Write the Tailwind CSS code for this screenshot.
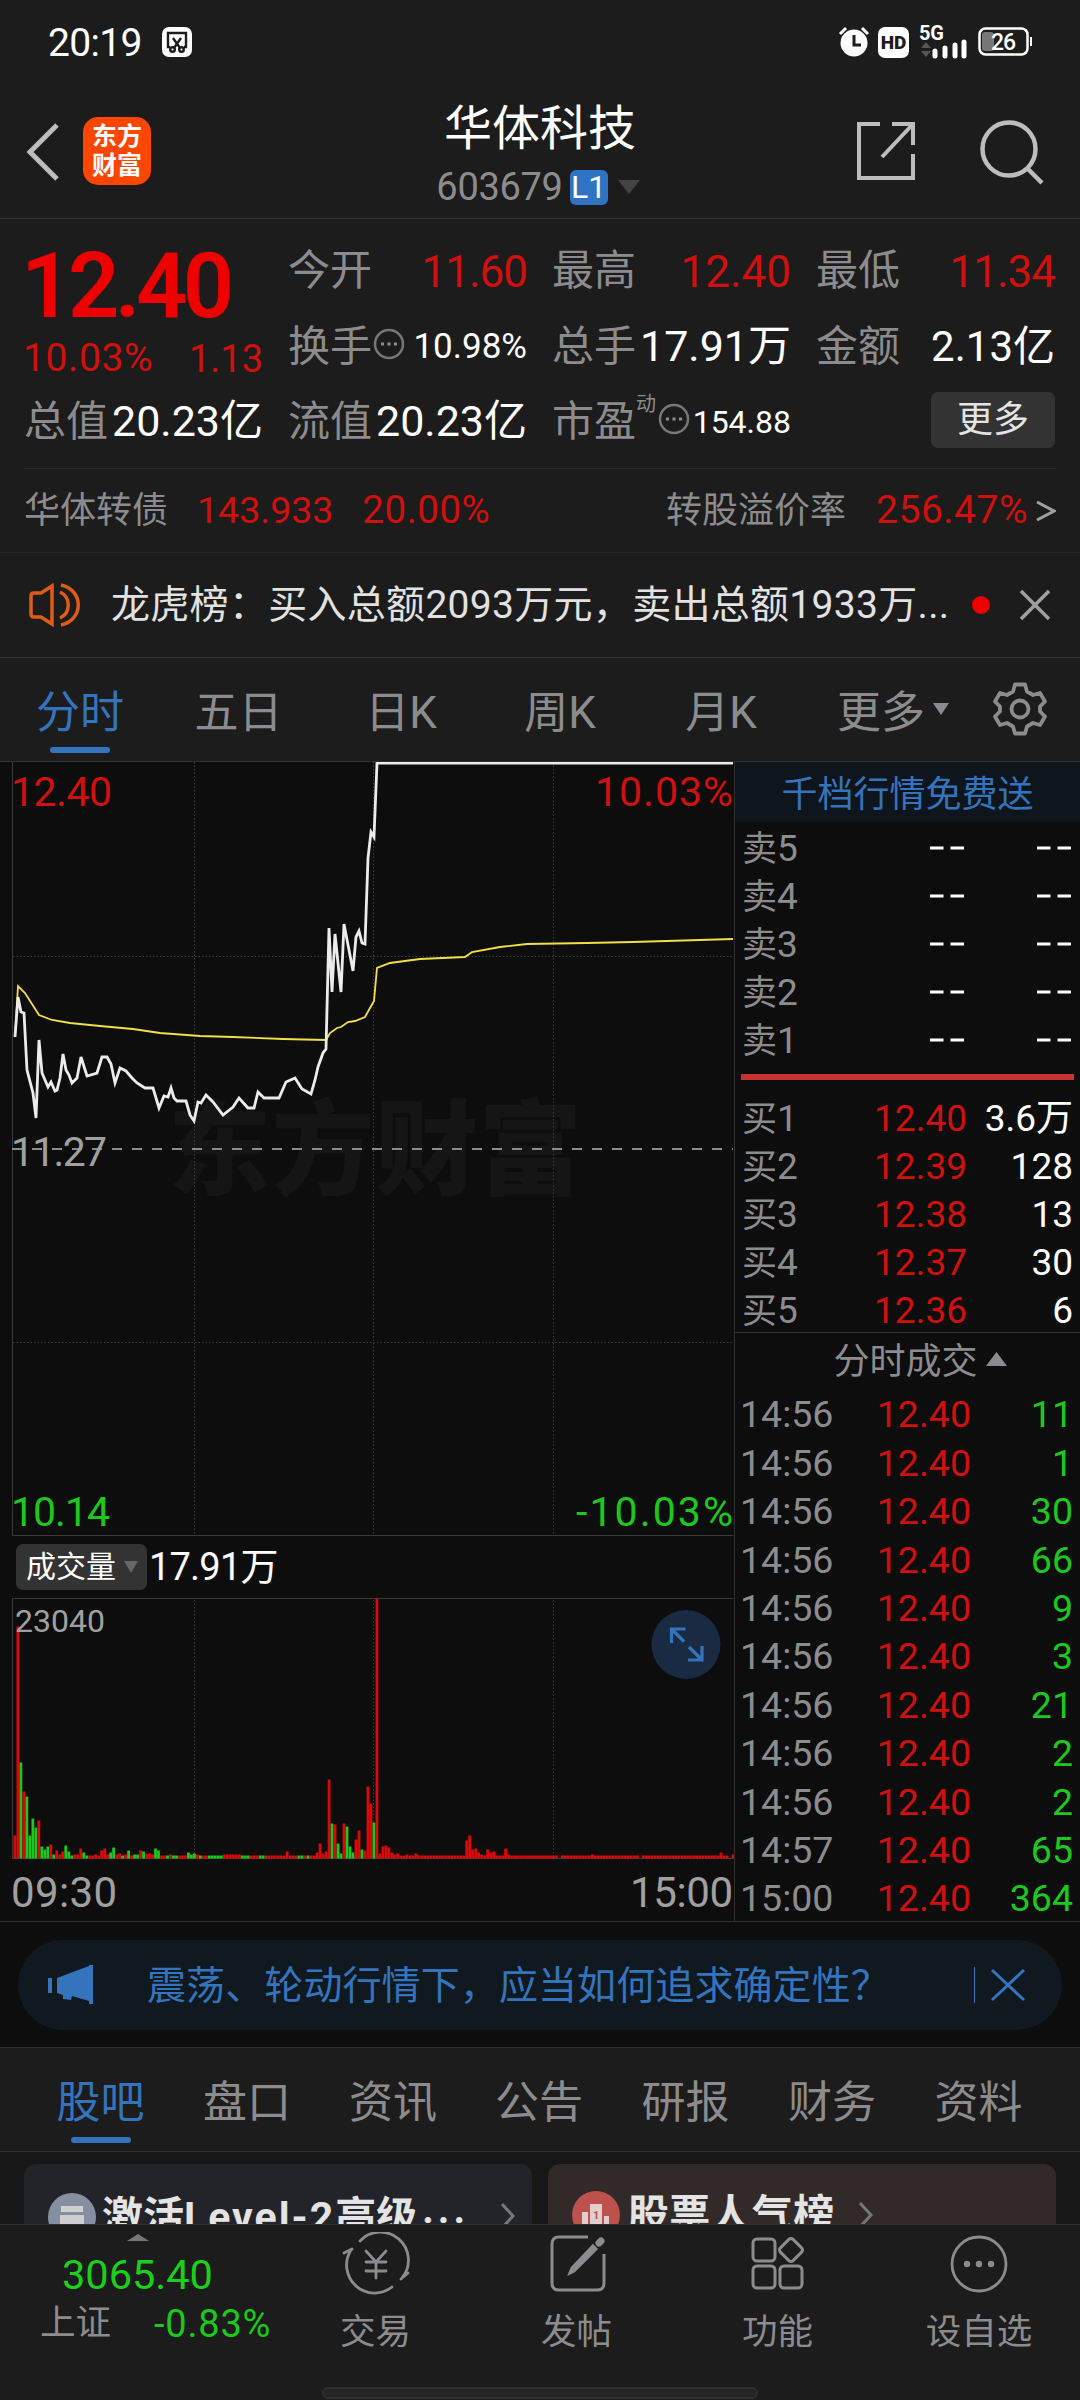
<!DOCTYPE html>
<html lang="zh-CN">
<head>
    <meta charset="UTF-8">
    <meta name="viewport" content="width=device-width, initial-scale=1.0">
    <title>华体科技 603679</title>
    <script src="https://cdn.jsdelivr.net/npm/@tailwindcss/browser@4"></script>
</head>
<body class="bg-[#1c1c1c]">
<div class="w-[1080px] h-[2400px] overflow-hidden flex flex-col bg-[#1c1c1c] text-[#8c8c8e] leading-none whitespace-nowrap font-[Roboto,'Noto_Sans_CJK_SC',sans-serif]">

    <!-- Status bar -->
    <div class="h-[84px] shrink-0 flex items-center pl-[48px] pr-[48px] text-white">
        <span class="text-[39px] tracking-[-.7px] pt-[2px]">20:19</span>
        <svg class="ml-[19px]" width="32" height="32" viewBox="0 0 32 32" fill="none">
            <rect x="1" y="1" width="30" height="30" rx="7" fill="#fff"/>
            <g stroke="#1c1c1c" stroke-width="2.4">
                <path d="M9 21H7V7h18v14h-2"/>
                <path d="M12 12l7 10M20 12l-7 10"/>
                <circle cx="11.500" cy="23.500" r="2.300"/><circle cx="20.500" cy="23.500" r="2.300"/>
            </g>
        </svg>
        <div class="ml-auto flex items-center">
            <svg width="32" height="34" viewBox="0 0 32 34" fill="none">
                <circle cx="16" cy="18" r="13.500" fill="#fff"/>
                <path d="M2 9l6-6M30 9l-6-6" stroke="#fff" stroke-width="3"/>
                <path d="M16 10v10h7" stroke="#1c1c1c" stroke-width="3"/>
            </svg>
            <span class="ml-[8px] w-[31px] h-[31px] rounded-[7px] bg-white text-[#1c1c1c] text-[19px] font-black flex items-center justify-center">HD</span>
            <svg class="ml-[10px] overflow-visible" width="50" height="34" viewBox="0 0 50 34">
                <text x="0" y="15" font-size="20" font-weight="700" textLength="25" fill="#fff">5G</text>
                <path d="M7 17l5 6H2zM7 32l5-6H2z" fill="#555"/>
                <path d="M16 31v-5M26 31v-8M36 31v-11M45 31v-14" stroke="#fff" stroke-width="5" stroke-linecap="round"/>
            </svg>
            <svg class="ml-[9px]" width="54" height="30" viewBox="0 0 54 30">
                <rect x="1.500" y="1.500" width="48" height="26" rx="6" fill="none" stroke="#fff" stroke-width="2.500"/>
                <rect x="4" y="5" width="12" height="19" rx="3" fill="#777"/>
                <path d="M53 10v9" stroke="#fff" stroke-width="2"/>
                <text x="13" y="23" font-size="23" font-weight="500" textLength="25" fill="#fff">26</text>
            </svg>
        </div>
    </div>

    <!-- Title bar -->
    <div class="h-[135px] shrink-0 flex items-start border-b border-[#303030]">
        <div class="w-[380px] flex pl-[25px] pt-[33px]">
            <svg class="mt-[5px]" width="36" height="60" viewBox="0 0 36 60" fill="none" stroke="#bdbdbd" stroke-width="5"><path d="M32 3L5 30l27 27"/></svg>
            <div class="ml-[22px] w-[68px] h-[68px] rounded-[15px] bg-[#ff4600] text-white text-[25px] leading-[29px] font-bold text-center pt-[5px]">东方<br>财富</div>
        </div>
        <div class="w-[320px] flex flex-col items-center pt-[21px]">
            <div class="text-[48px] text-white">华体科技</div>
            <div class="mt-[15px] flex items-center">
                <span class="text-[38px] tracking-[-.3px]">603679</span>
                <span class="ml-[7px] w-[38px] h-[35px] rounded-[6px] bg-[#2f74c2] text-white text-[32px] flex items-center justify-center">L1</span>
                <svg class="ml-[10px] mr-[4px]" width="22" height="14" viewBox="0 0 22 14"><path d="M0 0h22L11 14z" fill="#444"/></svg>
            </div>
        </div>
        <div class="w-[380px] flex items-start justify-end pr-[35px] pt-[36px]">
            <svg width="60" height="62" viewBox="0 0 60 62" fill="none" stroke="#bdbdbd" stroke-width="4">
                <path d="M24 4H3v54h54V34M36 4h21v21M57 4L26 37"/>
            </svg>
            <svg class="ml-[63px]" width="66" height="66" viewBox="0 0 66 66" fill="none" stroke="#bdbdbd" stroke-width="4.500">
                <circle cx="30" cy="29" r="26.500"/><path d="M48 48l15 15"/>
            </svg>
        </div>
    </div>

    <!-- Quote -->
    <div class="h-[250px] shrink-0 mx-[24px] pt-[15px] border-b border-[#292929]">
        <div class="grid grid-cols-[239px_239px_239px_239px] gap-x-[25px] auto-rows-[75px] items-center text-[42px]">
            <div class="row-span-2 text-[#ee0000] self-start pt-[8px]">
                <div class="text-[90px] font-semibold tracking-[-4.500px] -ml-[3px]">12.40</div>
                <div class="flex justify-between items-center text-[39px] text-[#d0100e] mt-[7px]"><span class="tracking-[.6px] -ml-[1px]">10.03%</span><span class="text-[38px]">1.13</span></div>
            </div>
            <div class="flex justify-between"><span>今开</span><span class="text-[44px] tracking-[-1px] text-[#d0100e]">11.60</span></div>
            <div class="flex justify-between"><span>最高</span><span class="text-[44px] text-[#d0100e]">12.40</span></div>
            <div class="flex justify-between"><span>最低</span><span class="text-[44px] tracking-[-1px] text-[#d0100e]">11.34</span></div>
            <div class="flex items-center">
                <span>换手</span>
                <svg class="ml-[1px] -mt-[6px]" width="32" height="32" viewBox="0 0 32 32"><circle cx="16" cy="16" r="14" fill="none" stroke="#77777a" stroke-width="2.500"/><path d="M8 14.500h3v3H8zM14.500 14.500h3v3h-3zM21 14.500h3v3h-3z" fill="#8c8c8e"/></svg>
                <span class="ml-auto text-[35px] text-white">10.98%</span>
            </div>
            <div class="flex items-center justify-between"><span>总手</span><span class="text-[43px] text-white">17.91万</span></div>
            <div class="flex items-center justify-between"><span>金额</span><span class="text-[42px] text-white">2.13亿</span></div>
            <div class="flex items-center justify-between"><span>总值</span><span class="text-[43px] text-white">20.23亿</span></div>
            <div class="flex items-center justify-between"><span>流值</span><span class="text-[43px] text-white">20.23亿</span></div>
            <div class="flex items-center">
                <span>市盈</span><span class="text-[20px] -mt-[36px]">动</span>
                <svg class="ml-[2px] -mt-[6px]" width="32" height="32" viewBox="0 0 32 32"><circle cx="16" cy="16" r="14" fill="none" stroke="#77777a" stroke-width="2.500"/><path d="M8 14.500h3v3H8zM14.500 14.500h3v3h-3zM21 14.500h3v3h-3z" fill="#8c8c8e"/></svg>
                <span class="ml-auto text-[32px] text-white">154.88</span>
            </div>
            <div class="ml-auto w-[124px] h-[56px] rounded-[7px] bg-[#333] text-[#e4e4e4] text-[36px] -mt-[4px] flex items-center justify-center">更多</div>
        </div>
    </div>

    <!-- Convertible bond -->
    <div class="h-[84px] shrink-0 flex items-center px-[24px] border-b border-[#262626] text-[36px]">
        <span>华体转债</span>
        <span class="ml-[29px] text-[37.500px] text-[#d0100e]">143.933</span>
        <span class="ml-[29px] text-[38.500px] tracking-[.5px] text-[#d0100e]">20.00%</span>
        <span class="ml-auto">转股溢价率</span>
        <span class="ml-[30px] text-[39px] tracking-[.5px] text-[#d0100e]">256.47%</span>
        <svg class="ml-[8px]" width="20" height="22" viewBox="0 0 20 22" fill="none" stroke="#a0a0a0" stroke-width="3"><path d="M1 2l17 9L1 20"/></svg>
    </div>

    <!-- Notice -->
    <div class="h-[105px] shrink-0 flex items-center pl-[28px] pr-[28px] border-b border-[#303030]">
        <svg width="54" height="46" viewBox="0 0 54 46" fill="none" stroke="#df5c14" stroke-width="3.500">
            <path d="M24 4L13 11H6q-3 0-3 3v18q0 3 3 3h7l11 7zM32 10c11 5 11 21 0 26M33 3c23 5 23 35 0 40"/>
        </svg>
        <span class="ml-[29px] w-[840px] text-[39px] tracking-[.3px] pt-[1px] text-[#e2e2e2]">龙虎榜：买入总额2093万元，卖出总额1933万...</span>
        <span class="ml-[21px] w-[18px] h-[18px] rounded-full bg-[#f00000] shrink-0"></span>
        <svg class="ml-auto shrink-0" width="34" height="34" viewBox="0 0 34 34" stroke="#a0a0a0" stroke-width="3.500"><path d="M3 3l28 28M31 3L3 31"/></svg>
    </div>

    <!-- Period tabs -->
    <div class="h-[104px] shrink-0 flex border-b border-[#303030] text-[44px]">
        <div class="w-[160px] flex flex-col items-center text-[#3474bd]"><span class="mt-[33px]">分时</span><span class="mt-[12px] w-[60px] h-[6px] rounded-full bg-[#3474bd]"></span></div>
        <div class="w-[157px] mt-[33px] text-center">五日</div>
        <div class="w-[168px] mt-[33px] text-center">日K</div>
        <div class="w-[150px] mt-[33px] text-center">周K</div>
        <div class="w-[172px] mt-[33px] text-center">月K</div>
        <div class="ml-[30px] mt-[33px] flex items-start">更多<svg class="ml-[8px] mt-[12px]" width="16" height="12" viewBox="0 0 16 12"><path d="M0 0h16L8 12z" fill="#8c8c8e"/></svg></div>
        <svg class="ml-[44px] mt-[24px]" width="54" height="54" viewBox="0 0 54 54" fill="none" stroke="#8c8c8e" stroke-width="3.800" stroke-linejoin="round">
            <path d="M22 2.500h10l2 7 6 3.500 7-2 5 8.500-5 5v5l5 5-5 8.500-7-2-6 3.500-2 7H22l-2-7-6-3.500-7 2-5-8.500 5-5v-5l-5-5L7 11l7 2 6-3.500z"/>
            <circle cx="27" cy="27" r="8.500"/>
        </svg>
    </div>

    <!-- Charts and order book -->
    <div class="h-[1160px] shrink-0 flex bg-[#0d0d0d] border-b border-[#303030]">
        <div class="w-[734px] flex flex-col">
            <svg class="shrink-0" width="734" height="776" viewBox="0 762 734 776" fill="none">
                <text x="168" y="1187" font-size="103" font-weight="900" textLength="414" fill="#151515">东方财富</text>
                <g stroke="#3d3d3d" stroke-dasharray="1.500 2">
                    <path d="M194.500 762V1535M373.500 762V1535M553.500 762V1535M13 956.500H733M13 1342.500H733"/>
                </g>
                <path d="M12.500 762V1535.500H733" stroke="#3a3a3a"/>
                <path d="M12 1149H733" stroke="#8c8c8c" stroke-width="2" stroke-dasharray="10 10"/>
                <polyline stroke="#f2e04a" stroke-width="1.800" points="15,1037 18,986 25,993 39,1015 52,1020 70,1023 100,1026 133,1029 160,1033 200,1036 233,1037 283,1039 326,1040 330,1033 337,1028 341,1027 348,1022 355,1021 365,1017 370,1008 374,1001 377,968 390,963 420,959 465,957 472,952 500,947 527,944 587,943 633,942 733,939"/>
                <polyline stroke="#ececec" stroke-width="2.800" points="15,1037 18,997 21,1012 24,1013 27,1070 33,1093 36,1118 39,1040 42,1073 48,1087 51,1082 55,1091 57,1090 60,1078 63,1054 66,1070 69,1075 72,1083 77,1078 81,1057 87,1076 97,1073 102,1057 107,1057 111,1064 115,1083 120,1068 126,1071 132,1078 137,1083 145,1088 153,1088 159,1108 164,1096 168,1097 171,1088 174,1098 177,1101 186,1101 190,1115 194,1121 198,1102 201,1103 206,1095 213,1102 223,1115 233,1107 239,1098 248,1108 254,1108 258,1092 264,1098 279,1098 286,1082 295,1078 302,1089 311,1094 315,1080 318,1067 323,1053 326,1049 329,928 332,992 335,934 341,992 344,924 353,971 356,937 359,931 362,943 365,944 368,858 371,832 374,837 377,763 733,763"/>
                <g font-size="41">
                    <text x="11" y="806" textLength="101" fill="#d0100e">12.40</text>
                    <text x="595" y="806" textLength="138" fill="#d0100e">10.03%</text>
                    <text x="11" y="1166" textLength="96" fill="#a0a0a0">11.27</text>
                    <text x="11" y="1526" textLength="99" fill="#1bc81b">10.14</text>
                    <text x="576" y="1526" textLength="157" fill="#1bc81b">-10.03%</text>
                </g>
            </svg>
            <div class="h-[58px] shrink-0 flex items-center pl-[16px] text-white">
                <span class="w-[131px] h-[46px] rounded-[7px] bg-[#333] pl-[10px] flex items-center text-[30px]">成交量<svg class="ml-[8px]" width="14" height="12" viewBox="0 0 14 12"><path d="M0 0h14L7 12z" fill="#666"/></svg></span>
                <span class="ml-[2px] text-[38px] tracking-[-.8px]">17.91万</span>
            </div>
            <svg class="shrink-0" width="734" height="324" viewBox="0 1596 734 324" fill="none">
                <path d="M194.500 1600V1858M373.500 1600V1858M553.500 1600V1858" stroke="#3d3d3d" stroke-dasharray="1.500 2"/>
                <path d="M733 1598.500H12.500V1858.500H733" stroke="#3a3a3a"/>
                <g id="bars"></g>
                <text x="15" y="1632" font-size="32" fill="#a0a0a0">23040</text>
                <g font-size="42" fill="#a0a0a0">
                    <text x="11" y="1907" textLength="106">09:30</text>
                    <text x="630" y="1907" textLength="103">15:00</text>
                </g>
                <circle cx="686" cy="1644.500" r="34.500" fill="#182b42"/>
                <path d="M671.500 1643v-14h14M672 1629.500l12 12M688 1660h14v-14M701 1659l-12-12" stroke="#3474bd" stroke-width="3.200"/>
            </svg>
        </div>

        <div class="w-[346px] border-l border-[#303030]">
            <div class="h-[60px] bg-[#0f151c] text-[#3474bd] text-[36px] pt-[5px] flex items-center justify-center">千档行情免费送</div>
            <div id="asks" class="pt-[2px]"></div>
            <div class="h-[6px] ml-[6px] mr-[6px] mt-[10px] mb-[14px] bg-[#c83232]"></div>
            <div id="bids"></div>
            <div class="mt-[-2px] h-[59px] border-t border-[#303030] pl-[25px] flex items-center justify-center text-[36px]">分时成交<svg class="ml-[8px] -mt-[6px]" width="21" height="14" viewBox="0 0 21 14"><path d="M10.500 0L21 14H0z" fill="#8c8c8e"/></svg></div>
            <div id="trades"></div>
        </div>
    </div>

    <!-- Promo strip -->
    <div class="h-[126px] shrink-0 bg-[#0d0d0d] border-b border-[#303030] pt-[18px] px-[18px]">
        <div class="h-[90px] rounded-full bg-[#101820] text-[#3474bd] flex items-center pl-[29px] pr-[36px]">
            <svg width="48" height="42" viewBox="0 0 48 42" fill="#3474bd"><path d="M1 14h4v15H1zM10 14L42 2V1h4v39h-4v-3l-17-5-1 4-8-1v-4l-6-2z"/></svg>
            <span class="ml-[52px] pt-[2px] text-[39px] tracking-[.1px]">震荡、轮动行情下，应当如何追求确定性？</span>
            <span class="ml-auto w-[1.500px] h-[36px] bg-[#3474bd]"></span>
            <svg class="ml-[15px]" width="36" height="34" viewBox="0 0 36 34" stroke="#3474bd" stroke-width="3"><path d="M2 2l32 30M34 2L2 32"/></svg>
        </div>
    </div>

    <!-- Section tabs -->
    <div class="h-[104px] shrink-0 border-b border-[#303030] flex px-[27px] text-[44px] text-center">
        <div class="w-[147px] flex flex-col items-center text-[#3474bd]"><span class="mt-[33px]">股吧</span><span class="mt-[12px] w-[60px] h-[6px] rounded-full bg-[#3474bd]"></span></div>
        <div class="w-[146px] mt-[33px]">盘口</div>
        <div class="w-[146px] mt-[33px]">资讯</div>
        <div class="w-[146px] mt-[33px]">公告</div>
        <div class="w-[147px] mt-[33px]">研报</div>
        <div class="w-[146px] mt-[33px]">财务</div>
        <div class="w-[147px] mt-[33px]">资料</div>
    </div>

    <!-- Cards, cut off by the bottom bar -->
    <div class="h-[72px] shrink-0 overflow-hidden bg-[#171717] pt-[12px] px-[24px] flex gap-[16px] text-[41px] font-bold text-[#e4e4e4]">
        <div class="w-[508px] h-[110px] rounded-[12px] bg-[#232429] flex items-start pl-[23px] pr-[17px]">
            <svg class="mt-[28px]" width="50" height="50" viewBox="0 0 50 50"><circle cx="25" cy="25" r="24" fill="#868fa1"/><path d="M14 14h22v6H14zM13 23h24v16H13z" fill="#cfcfd1"/></svg>
            <span class="ml-[5px] mt-[33px] h-[41px] flex items-center">激活<span class="tracking-[2px]">Level-2</span>高级<span class="tracking-[4px] ml-[5px] -mt-[16px] text-[40px]">...</span></span>
            <svg class="ml-auto mt-[39px]" width="14" height="26" viewBox="0 0 14 26" fill="none" stroke="#77777a" stroke-width="3"><path d="M1 1l11 12L1 25"/></svg>
        </div>
        <div class="w-[508px] h-[110px] rounded-[12px] bg-[#322a29] flex items-start pl-[23px]">
            <svg class="mt-[26px]" width="50" height="50" viewBox="0 0 50 50"><circle cx="25" cy="25" r="24" fill="#bd514c"/><path d="M11 22h6v18h-6zM19 14h12v26H19zM33 26h5v14h-5z" fill="#e0cfce"/><text x="22" y="29" font-size="11" fill="#bd514c">1</text></svg>
            <span class="ml-[7px] mt-[31px] tracking-[.3px]">股票人气榜</span>
            <svg class="ml-[24px] mt-[38px]" width="14" height="26" viewBox="0 0 14 26" fill="none" stroke="#77777a" stroke-width="3"><path d="M1 1l11 12L1 25"/></svg>
        </div>
    </div>

    <!-- Bottom bar -->
    <div class="h-[152px] shrink-0 border-t border-[#303030] flex text-[35.500px]">
        <div class="w-[275px] pt-[9px]">
            <svg class="ml-[127px]" width="22" height="7" viewBox="0 0 22 7"><path d="M11 0l11 7H0z" fill="#77777a"/></svg>
            <div class="w-[275px] mt-[13px] text-center text-[41.500px] text-[#1bd01b]">3065.40</div>
            <div class="mt-[9px] pl-[40px] flex items-center"><span>上证</span><span class="ml-[43px] text-[38px] tracking-[.8px] text-[#1bc81b]">-0.83%</span></div>
        </div>
        <div class="w-[201px] flex flex-col items-center pt-[7px]">
            <svg width="68" height="64" viewBox="0 0 68 64" fill="none" stroke="#8c8c8e" stroke-width="2.800" stroke-linecap="round">
                <path d="M18 9A28 28 0 0 1 60 46M50 55A28 28 0 0 1 9 18M2 21l8-4M66 41l-7 6"/>
                <path d="M24 19l10 11 10-11M34 30v16M24 30h20M24 39h20"/>
            </svg>
            <span class="mt-[19px]">交易</span>
        </div>
        <div class="w-[201px] flex flex-col items-center pt-[7px]">
            <svg width="60" height="64" viewBox="0 0 60 64" fill="none" stroke="#8c8c8e" stroke-width="3">
                <path d="M41 5H12q-7 0-7 7v39q0 7 7 7h38q7 0 7-7V22"/>
                <path d="M46 14l3 3-22 22-4 2 2-5z" fill="#8c8c8e"/>
                <path d="M52 11l2-2" stroke-width="7" stroke-linecap="round"/>
            </svg>
            <span class="mt-[19px]">发帖</span>
        </div>
        <div class="w-[201px] flex flex-col items-center pt-[7px]">
            <svg width="60" height="64" viewBox="0 0 60 64" fill="none" stroke="#8c8c8e" stroke-width="3">
                <rect x="5" y="7" width="22" height="22" rx="4"/><rect x="5" y="34" width="22" height="22" rx="4"/><rect x="32" y="34" width="22" height="22" rx="4"/>
                <rect x="34" y="9" width="18" height="18" rx="3" transform="rotate(45 43 18)"/>
            </svg>
            <span class="mt-[19px]">功能</span>
        </div>
        <div class="w-[202px] flex flex-col items-center pt-[7px]">
            <svg width="60" height="64" viewBox="0 0 60 64" fill="#8c8c8e">
                <circle cx="30" cy="32" r="27" fill="none" stroke="#8c8c8e" stroke-width="2.800"/>
                <circle cx="18" cy="32" r="3.200"/><circle cx="30" cy="32" r="3.200"/><circle cx="42" cy="32" r="3.200"/>
            </svg>
            <span class="mt-[19px]">设自选</span>
        </div>
    </div>
    <div class="mt-[11px] h-[12px] w-[436px] mx-auto shrink-0 rounded-full bg-[#242424] border-2 border-[#2e2e2e]"></div>
</div>

<script>
    // one entry per minute: colour, height, optional repeat
    const volume = 'r23 r232 g96 r67 g62 g23 g40 g31 r38 g12 g9 g12 r14 g4 r8 r4 r7 g13 g7 g3 r4*2 r10 g6 g3 r3*2 r4 r3 r8 r10 r4 g6 g11 r4 r5 g3 r4 g8 r3 g4*2 r8 g7 r5*2 r4 g10 g8 r3*2 g3 r4 g3*2 r3*3 g6 g4 g5 r4 g3 r3*2 g3*5 r4*6 g3*3 r3*3 g3*2 r3*7 r7 r3*3 g3*2 r3 g3 r3*2 r6 r15 r5 r7 r79 g35 r34 g15 g5 r35 g32 g12 g6 r19 r28 g9 r8 r72 r55 g36 r260 r5 r12 r13 r11 r6 r4 r5 r3*2 r4 r3*2 r5 r3*16 r18 r23 r9 r10 r6 r4 r3 r9 r6 r7 r3*3 r10 r4 r3*16 r0 r3*10 r4 r3*15 r0 r3*26 r6 r3*2 r0 r4';

    let minute = 0, rects = '';
    for (const item of volume.split(' ')) {
        const [bar, times] = item.split('*');
        const h = Number(bar.slice(1));
        for (let n = 0; n < (times || 1); n++) {
            const x = 13.5 + 2.992 * minute++;
            rects += `<rect x="${x}" y="${1858.5 - h}" width="2.8" height="${h}" fill="${bar[0] === 'r' ? '#dc0808' : '#1bc81b'}"/>`;
        }
    }
    document.getElementById('bars').innerHTML = rects;

    const asks = ['卖5', '卖4', '卖3', '卖2', '卖1'];
    const bids = [['买1', '12.40', '3.6万'], ['买2', '12.39', '128'], ['买3', '12.38', '13'], ['买4', '12.37', '30'], ['买5', '12.36', '6']];
    const trades = [['14:56', 11], ['14:56', 1], ['14:56', 30], ['14:56', 66], ['14:56', 9], ['14:56', 3], ['14:56', 21], ['14:56', 2], ['14:56', 2], ['14:57', 65], ['15:00', 364]];

    const dash = '<svg width="35" height="4" viewBox="0 0 35 4"><path d="M0 2h13.500M20.500 2h13.500" stroke="#fff" stroke-width="3"/></svg>';

    document.getElementById('asks').innerHTML = asks.map(name => `
        <div class="h-[48px] flex items-center pl-[7px] pr-[8px] text-[37px]">
            <span class="w-[90px]"><span class="text-[35px]">${name[0]}</span>${name[1]}</span>
            <span class="w-[133px] flex justify-end">${dash}</span>
            <span class="ml-auto">${dash}</span>
        </div>`).join('');

    document.getElementById('bids').innerHTML = bids.map(([name, price, count]) => `
        <div class="h-[48px] flex items-center pl-[7px] pr-[7px] text-[37px]">
            <span class="w-[90px]"><span class="text-[35px]">${name[0]}</span>${name[1]}</span>
            <span class="w-[135px] text-right text-[#d0100e]">${price}</span>
            <span class="ml-auto text-white">${count}</span>
        </div>`).join('');

    document.getElementById('trades').innerHTML = trades.map(([time, count]) => `
        <div class="h-[48.400px] flex items-center pl-[5px] pr-[7px] text-[37.500px]">
            <span class="w-[110px]">${time}</span>
            <span class="w-[121px] text-right text-[#d0100e]">12.40</span>
            <span class="ml-auto text-[#1bc81b]">${count}</span>
        </div>`).join('');
</script>
</body>
</html>
